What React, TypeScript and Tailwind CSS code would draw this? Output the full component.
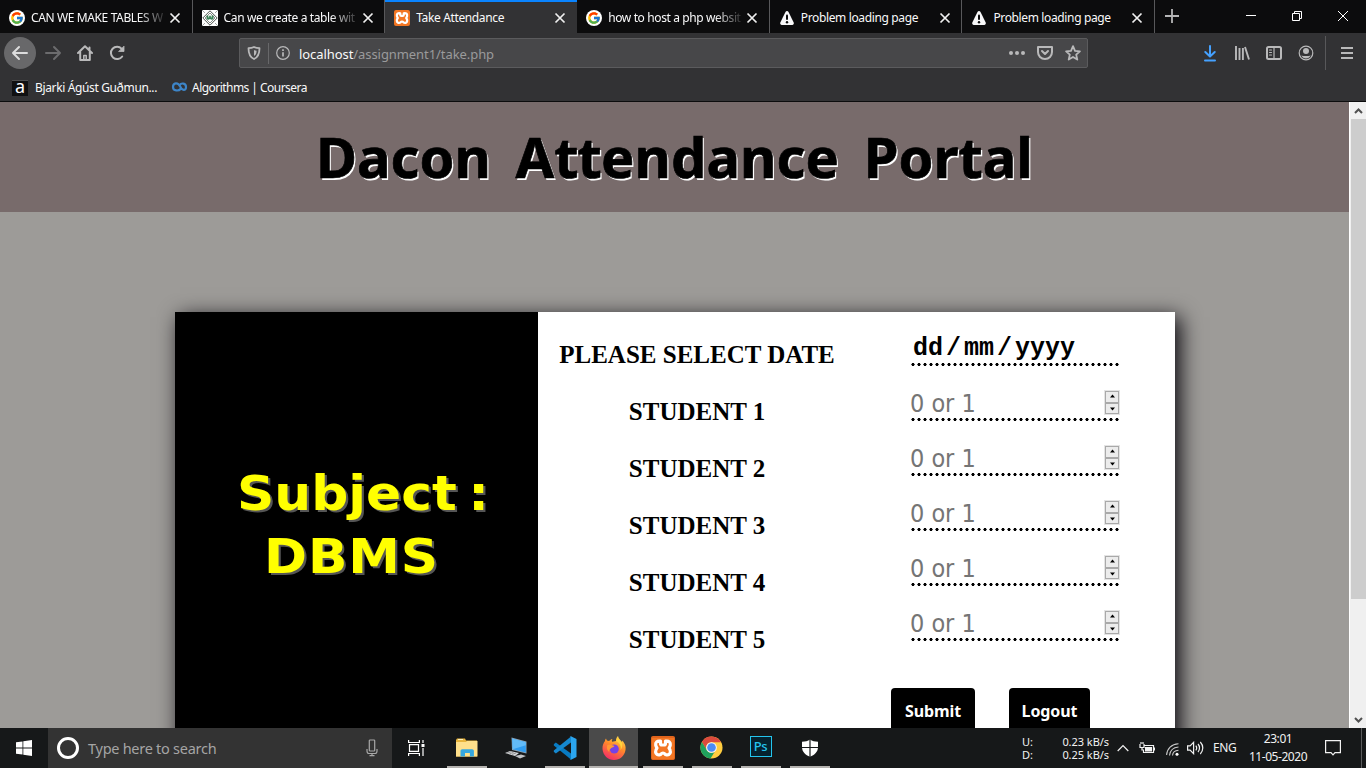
import type { ReactNode } from "react";
import { FcGoogle } from "react-icons/fc";

const ui = "font-['Noto_Sans','Open_Sans',sans-serif]";

function CloseIcon() {
  return (
    <svg width="12" height="12" viewBox="0 0 12 12" fill="none" stroke="#f0f0f0" strokeWidth="1.7">
      <path d="M1.5 1.5 10.5 10.5M10.5 1.5 1.5 10.5" />
    </svg>
  );
}

function GoogleIcon() {
  return (
    <span className="flex h-4 w-4 items-center justify-center rounded-full bg-white">
      <FcGoogle size={14} />
    </span>
  );
}

function GeeksIcon() {
  return (
    <svg width="16" height="16" viewBox="0 0 16 16" fill="none">
      <rect width="16" height="16" fill="#fff" />
      <path d="M8 .8 15.2 8 8 15.2.8 8Z" stroke="#4a514c" strokeWidth="1" />
      <path d="M8 3 13 8 8 13 3 8Z" stroke="#6b736d" strokeWidth=".8" />
      <path d="M4.5 5.5c2 .3 5 .3 7 0v3.200c-1 1.300-2 1.300-3.500.300-1.500 1-2.500 1-3.500-.300Z" fill="#3c8358" />
      <path d="M6 6.800h1.200M8.800 6.800H10" stroke="#fff" strokeWidth=".9" />
      <path d="M0 0 3 3M16 0l-3 3M0 16l3-3M16 16l-3-3" stroke="#8a908c" strokeWidth=".8" />
    </svg>
  );
}

function XamppIcon({ big = false }: { big?: boolean }) {
  return (
    <span
      className={
        big
          ? "flex h-6 w-6 items-center justify-center rounded-[2px] border border-t-2 border-[#e0641c] bg-[#f37623]"
          : "flex h-4 w-4 items-center justify-center rounded-[2px] bg-[#f37623]"
      }
    >
      <svg className="shrink-0" width={big ? 20 : 14} height={big ? 20 : 14} viewBox="0 0 20 20" fill="none" stroke="#fff" strokeWidth="3.200" strokeLinejoin="round">
        <path d="M7.500 3.200C4 2.600 2.300 4.300 2.700 7c.2 1.400.7 2 1.300 3-1 1.200-1.500 2.400-1.400 4 .2 2.300 2 3.300 4.400 2.800 1.200-.3 1-1.800 3-1.800s1.800 1.500 3 1.800c2.400.5 4.200-.5 4.400-2.800.1-1.600-.4-2.800-1.400-4 .6-1 1.100-1.600 1.300-3 .4-2.700-1.300-4.400-4.800-3.800v2.300c0 1-.5 1.500-1.500 1.500H9c-1 0-1.500-.5-1.500-1.500Z" />
      </svg>
    </span>
  );
}

function WarningIcon() {
  return (
    <svg width="16" height="16" viewBox="0 0 16 16">
      <path d="M8 1c.7 0 1.200.4 1.500 1l5.200 10.600c.5 1.100-.2 2.400-1.500 2.400H2.800c-1.300 0-2-1.300-1.500-2.400L6.500 2C6.800 1.400 7.300 1 8 1Z" fill="#f9f9fa" />
      <rect x="7" y="4.600" width="2" height="5.400" rx="1" fill="#0c0c0d" />
      <circle cx="8" cy="12.200" r="1.200" fill="#0c0c0d" />
    </svg>
  );
}

function Tab({ icon, title, active = false, fade = false }: { icon: ReactNode; title: string; active?: boolean; fade?: boolean }) {
  return (
    <div
      className={
        active
          ? "flex h-[33px] w-[192px] shrink-0 items-center border-t-2 border-[#0a84ff] bg-[#323234] pl-[9px]"
          : "flex h-[33px] w-[192.600px] shrink-0 items-center border-r border-[#58585a] bg-[#0c0c0d] pl-[9px] pt-[2px]"
      }
    >
      <span className="w-4 shrink-0">{icon}</span>
      <span
        className={
          fade
            ? "ml-[6px] w-[137px] shrink-0 whitespace-nowrap text-[12px] tracking-[-0.38px] text-[#f9f9fa] [mask-image:linear-gradient(to_right,black_78%,transparent_100%)]"
            : "ml-[6px] w-[137px] shrink-0 whitespace-nowrap text-[12px] tracking-[-0.36px] text-[#f9f9fa]"
        }
      >
        {title}
      </span>
      <span className="ml-[1px]"><CloseIcon /></span>
    </div>
  );
}

function TabBar() {
  return (
    <div className="flex h-[33px] bg-[#0c0c0d]">
      <Tab icon={<GoogleIcon />} title="CAN WE MAKE TABLES W" fade />
      <Tab icon={<GeeksIcon />} title="Can we create a table wit" fade />
      <Tab icon={<XamppIcon />} title="Take Attendance" active />
      <Tab icon={<GoogleIcon />} title="how to host a php websit" fade />
      <Tab icon={<WarningIcon />} title="Problem loading page" />
      <Tab icon={<WarningIcon />} title="Problem loading page" />
      <svg className="ml-[10px] mt-[9px]" width="14" height="14" viewBox="0 0 14 14" stroke="#b5b5b6" strokeWidth="1.800">
        <path d="M7 0v14M0 7h14" />
      </svg>
      <div className="ml-auto flex w-[121px] justify-between pr-[17px] pt-[10px]">
        <svg width="12" height="12" viewBox="0 0 12 12" stroke="#fff"><path d="M1 5.500h10" /></svg>
        <svg width="12" height="12" viewBox="0 0 12 12" fill="none" stroke="#fff"><path d="M1.500 3.500h7v7h-7zM3.500 3V1.500h7v7H9" /></svg>
        <svg width="12" height="12" viewBox="0 0 12 12" stroke="#fff"><path d="M1 1l10 10M11 1 1 11" /></svg>
      </div>
    </div>
  );
}

const line = { fill: "none", stroke: "#b9b9ba", strokeWidth: 2, strokeLinecap: "round", strokeLinejoin: "round" } as const;

function Toolbar() {
  return (
    <div className="flex h-[41px] items-center bg-[#323234] pl-1">
      <div className="-mt-[1px] flex h-8 w-8 items-center justify-center rounded-full bg-[#68686a]">
        <svg width="18" height="16" viewBox="0 0 18 16" {...line} stroke="#dcdcdd"><path d="M16 8H2M8 2 2 8l6 6" /></svg>
      </div>
      <svg className="-mt-[1px] ml-[8px]" width="18" height="16" viewBox="0 0 18 16" {...line} stroke="#6c6c6e"><path d="M2 8h14M10 2l6 6-6 6" /></svg>
      <svg className="-mt-[1px] ml-[15px]" width="16" height="16" viewBox="0 0 16 16" {...line}>
        <path d="M1 8 8 1.300 15 8M3.200 7v8h9.600V7M12.500 2.500v2" />
        <path d="M6.800 14.500v-4h2.400v4" strokeWidth="1.500" />
      </svg>
      <svg className="-mt-[2px] ml-[16px]" width="16" height="16" viewBox="0 0 16 16" {...line}>
        <path d="M13.200 11.500A6.200 6.200 0 1 1 12.600 3.600L14 5" />
        <path d="M15 1.500v5h-5Z" fill="#b9b9ba" strokeWidth=".8" />
      </svg>
      <div className="-mt-[1px] ml-[114px] flex h-[30px] w-[849px] items-center rounded-[2px] border border-[#5b5b5d] bg-[#474749]">
        <svg className="ml-[7px]" width="14" height="14" viewBox="0 0 14 14" fill="none" stroke="#b9b9ba" strokeWidth="1.800" strokeLinejoin="round">
          <path d="M7 1C5.500 1.800 3.500 2.200 1.500 2.200 1.500 7 2.500 11 7 13c4.500-2 5.500-6 5.500-10.800C10.500 2.200 8.500 1.800 7 1Z" />
          <path d="M7 4v6c2-1 2.500-3 2.600-5.300C8.700 4.600 8 4.400 7 4Z" fill="#b9b9ba" stroke="none" />
        </svg>
        <span className="ml-[7px] h-[21px] w-px bg-[#68686a]" />
        <svg className="ml-[7px]" width="14" height="14" viewBox="0 0 14 14" fill="none" stroke="#b9b9ba">
          <circle cx="7" cy="7" r="6.300" strokeWidth="1.200" />
          <path d="M7 6.200V10.500M7 3.200v1.700" strokeWidth="1.700" />
        </svg>
        <span className="ml-[9px] pt-[3px] text-[13px] tracking-[-0.07px] text-[#9a9a9b]">
          <span className="text-[#f9f9fa]">localhost</span>/assignment1/take.php
        </span>
        <div className="ml-auto flex items-center pr-[6px]">
          <svg width="18" height="4" viewBox="0 0 18 4" fill="#b9b9ba"><circle cx="3" cy="2" r="2" /><circle cx="9" cy="2" r="2" /><circle cx="15" cy="2" r="2" /></svg>
          <svg className="ml-[11px]" width="16" height="14" viewBox="0 0 16 14" {...line}>
            <path d="M1 1h14v5c0 4-3 7-7 7s-7-3-7-7Z" /><path d="M5 5l3 3 3-3" />
          </svg>
          <svg className="ml-[12px]" width="16" height="16" viewBox="0 0 16 16" {...line} strokeWidth="1.800">
            <path d="m8 1.200 2 4.600 4.900.5-3.700 3.300 1.100 5L8 12l-4.300 2.600 1.100-5L1.100 6.300 6 5.800Z" />
          </svg>
        </div>
      </div>
      <div className="ml-auto flex h-full items-center pb-[1px]">
        <svg width="12" height="17" viewBox="0 0 12 17" {...line} stroke="#45a1ff"><path d="M6 1v10M1.300 7 6 11.500 10.700 7M1 15.500h10" /></svg>
        <svg className="ml-[18px]" width="16" height="14" viewBox="0 0 16 14" fill="none" stroke="#b9b9ba" strokeWidth="1.900"><path d="M2 0v14M5.500 2v12M8.900 2v12M11 1l4 12.500" /></svg>
        <svg className="ml-[16px]" width="16" height="14" viewBox="0 0 16 14" {...line}><rect x="1" y="1" width="14" height="12" rx="1.500" /><path d="M8 1v12M3.500 4h2M3.500 6.500h2M3.500 9h2" strokeWidth="1.200" /></svg>
        <svg className="ml-[16px]" width="16" height="16" viewBox="0 0 16 16"><circle cx="8" cy="8" r="6.800" fill="none" stroke="#b9b9ba" strokeWidth="1.200" /><circle cx="8" cy="6" r="3" fill="#b9b9ba" /><path d="M3.300 10.500c2 .7 7.400.7 9.400 0-1 2-2.700 3-4.700 3s-3.700-1-4.700-3Z" fill="#b9b9ba" /></svg>
        <span className="ml-[11px] h-[34px] w-px bg-[#58585a]" />
        <svg className="ml-[15px] mr-[13px]" width="12" height="12" viewBox="0 0 12 12" {...line} strokeLinecap="butt"><path d="M0 1h12M0 6h12M0 11h12" /></svg>
      </div>
    </div>
  );
}

function Bookmarks() {
  return (
    <div className="flex h-[28px] items-center border-b border-[#0c0c0d] bg-[#323234] pl-3 text-[12px] text-[#f9f9fa]">
      <span className="flex h-4 w-4 items-center justify-center border-t border-[#505050] bg-[#101011] pb-[4px] text-[18px] leading-none text-white">a</span>
      <span className="ml-[7px] w-[130px] whitespace-nowrap pt-[1px] tracking-[-0.36px]">Bjarki Ágúst Guðmun...</span>
      <svg className="-mt-[1px] ml-[6px]" width="17" height="10" viewBox="0 0 17 10" fill="none" stroke="#3d85c8" strokeWidth="2.200" strokeLinecap="round">
        <path d="M9.500 7C8 9 2 9.500 2 5s5-5 7-.8c2 4.800 6 4.800 6 .8s-4.800-4.500-6.300-1.800" />
      </svg>
      <span className="ml-[4px] whitespace-nowrap pt-[1px] tracking-[-0.54px]">Algorithms | Coursera</span>
    </div>
  );
}

function Dots() {
  return <div className="-ml-[2px] h-[3px] w-[210px] bg-[radial-gradient(circle,#000_1.350px,transparent_1.850px)] bg-[length:6px_3px]" />;
}

function NumberField() {
  return (
    <div className="flex h-[55px] flex-col justify-end">
      <div className="flex h-[30px] w-[207px] items-start">
        <span className="-ml-[2px] font-['DejaVu_Sans_Condensed','DejaVu_Sans',sans-serif] text-[25px] font-stretch-condensed leading-[31px] tracking-[-0.03px] text-[#757575]">0 or 1</span>
        <div className="-mr-[1px] ml-auto mt-[2px] flex h-[25px] w-[16px] flex-col border border-[#e4e4e4]">
          {["M2 4.500h5L4.500 1.500Z", "M2 2.500h5L4.500 5.500Z"].map((d) => (
            <span key={d} className="flex flex-1 items-center justify-center border border-[#a9a9a9] bg-[#ececec]">
              <svg width="9" height="7" viewBox="0 0 9 7"><path d={d} fill="#000" /></svg>
            </span>
          ))}
        </div>
      </div>
      <Dots />
    </div>
  );
}

const labels = ["PLEASE SELECT DATE", "STUDENT 1", "STUDENT 2", "STUDENT 3", "STUDENT 4", "STUDENT 5"];

function Portal() {
  return (
    <main className="flex h-[626px] overflow-hidden bg-[#9d9b98]">
      <div className="h-full w-[1349px] overflow-hidden">
        <h1 className="flex h-[110px] items-center justify-center whitespace-nowrap bg-[#786b6b] pb-[2px] text-[56px] font-bold text-black [-webkit-text-stroke:0.7px_#000] [text-shadow:1.500px_1.500px_0_#fff]">
          <span className="flex w-[717px] justify-between">
            <span>Dacon</span>
            <span className="tracking-[0.1px]">A<span className="tracking-[-1px]">tt</span>endance</span>
            <span>Portal</span>
          </span>
        </h1>
        <section className="ml-[175px] mt-[100px] flex h-[500px] w-[1000px] bg-white shadow-[5px_5px_20px_#08060c]">
          <div className="w-[363px] bg-black pt-[150px] font-['DejaVu_Sans',sans-serif] text-[48px] font-bold leading-[63px] text-[#ffff00] [text-shadow:2px_2px_0_#555]">
            <p className="ml-[62px] origin-left scale-x-[1.08] [word-spacing:-6px]">Subject :</p>
            <p className="ml-[89px] origin-left scale-x-[1.08] tracking-[0.8px]">DBMS</p>
          </div>
          <div className="w-[318px] pt-[14px] text-center font-['Liberation_Serif',serif] text-[25px] font-bold text-black">
            {labels.map((label) => (
              <p key={label} className="h-[57px] leading-[57px]">{label}</p>
            ))}
          </div>
          <div className="w-[319px]">
            <div className="ml-[56px] h-[51px] w-[207px] pl-[1px] pt-[22px] font-['Courier_10_Pitch','Liberation_Mono',monospace] text-[25px] font-bold leading-[29px] text-black">
              dd<span className="mx-[3px]">/</span>mm<span className="mx-[3px]">/</span>yyyy
            </div>
            <div className="ml-[56px]">
              <Dots />
              {labels.slice(1).map((label) => <NumberField key={label} />)}
            </div>
            <div className="ml-[35px] mt-[47px] flex gap-[34px] text-[16px] font-bold tracking-[-0.1px] text-white">
              <button className="h-[47px] w-[84px] rounded-[4px] bg-black pb-[2px]">Submit</button>
              <button className="h-[47px] w-[81px] rounded-[4px] bg-black pb-[2px]">Logout</button>
            </div>
          </div>
        </section>
      </div>
      <div className="flex w-[17px] flex-col items-center border-l border-white bg-[#f0f0f0]">
        <svg className="h-[17px] shrink-0" width="9" height="17" viewBox="0 0 9 17" fill="none" stroke="#505050" strokeWidth="2"><path d="m1 11 3.500-3.500L8 11" /></svg>
        <div className="h-[480px] w-[15px] bg-[#cdcdcd]" />
        <svg className="mt-auto h-[17px] shrink-0" width="9" height="17" viewBox="0 0 9 17" fill="none" stroke="#505050" strokeWidth="2"><path d="m1 7 3.500 3.500L8 7" /></svg>
      </div>
    </main>
  );
}

function ExplorerIcon() {
  return (
    <svg width="22" height="19" viewBox="0 0 22 19">
      <path d="M0 2 1 .5h8l1 2H21v16H0Z" fill="#e9b53c" />
      <path d="M0 4h10l1-1h10.500v15.500H0Z" fill="#ffe08b" />
      <path d="M2 1.500h5" stroke="#fff1bd" />
      <path d="M4.500 18.500V13c0-1 .8-1.700 1.700-1.700h10c1 0 1.700.7 1.700 1.700v5.500h-4V15H9v3.500Z" fill="#35a7df" />
    </svg>
  );
}

function ComputerIcon() {
  return (
    <svg width="24" height="22" viewBox="0 0 24 22">
      <path d="M7.500.5 22.500 4.500v12L8 13Z" fill="#8fa3b3" />
      <path d="M8.200 1.500 21.800 5.200v10.300L8.700 12.300Z" fill="#2f9cf0" />
      <path d="M8.200 1.500 21.800 5.200v3L8.700 12.300Z" fill="#62bbf8" />
      <path d="m1 16 5-2 9 2-4 3Z" fill="#d5d7da" /><path d="m11 19 6-1.500 5 1.500-6 2.500Z" fill="#c0c3c7" />
      <path d="m3 16.200 4-1.400m-1.500 2 4-1.400m-1.500 2 4-1.400" stroke="#777" strokeWidth=".7" />
    </svg>
  );
}

function CodeIcon() {
  return (
    <svg width="24" height="24" viewBox="0 0 24 24">
      <path d="M.8 8.300 2.800 6.500 18 17.500v6L.8 9.500Z" fill="#087bc2" />
      <path d="M.8 15.700 2.800 17.500 18 6.500v-6L.8 14.500Z" fill="#1588cf" />
      <path d="M18 .3 23.500 3v18L18 23.700 16.700 23c.8.3 1.300-.2 1.300-1V2c0-.8-.5-1.300-1.300-1Z" fill="#2ba5ee" />
    </svg>
  );
}

function FirefoxIcon() {
  return (
    <svg width="24" height="24" viewBox="0 0 24 24">
      <defs>
        <linearGradient id="fox" x1=".8" y1="0" x2=".3" y2="1"><stop stopColor="#ffe14b" /><stop offset=".45" stopColor="#ff8a2a" /><stop offset="1" stopColor="#f42b68" /></linearGradient>
      </defs>
      <path d="M3 5c0-1 .5-2 1-2.500C4.500 4 5 4.500 6 5l2-.5C8.500 3.500 9.500 3 10.500 3c-.8 1-.8 2-.3 2.800L14 5c-.3-2 .7-4 2-5 .5 3 3 4 4 6l.5-1.500C23 8 24 10 23.500 14 22.500 20 18 24 12 24S1 19.500.5 13C.3 9.500 1.500 7 3 5Z" fill="url(#fox)" />
      <circle cx="12.300" cy="13" r="4.500" fill="#7542e5" />
      <path d="M5.500 9c3-.8 5 .2 7 1-1 1.500-3.500 1.500-4 3 0 0-2 .5-1 3-3-2-3-5-2-7Z" fill="#ff9933" />
      <path d="M14 5c4 2 5.500 5 4.500 9 2-2 2-5 1.500-7l-4-5Z" fill="#ffd43c" />
    </svg>
  );
}

function ChromeIcon() {
  return (
    <svg width="23" height="23" viewBox="0 0 24 24">
      <circle cx="12" cy="12" r="11.500" fill="#ffcd40" />
      <path d="M2 6.250A11.500 11.500 0 0 1 22 6.500H12A5.500 5.500 0 0 0 7 14.500Z" fill="#dc4a3d" />
      <path d="M2 6.250 7.200 14.800A5.500 5.500 0 0 0 15.500 16.300L11 23.500A11.500 11.500 0 0 1 2 6.250Z" fill="#1fa15d" />
      <circle cx="12" cy="12" r="5.600" fill="#f5f5f5" /><circle cx="12" cy="12" r="4.500" fill="#4b8cf5" />
    </svg>
  );
}

function ShieldIcon() {
  return (
    <svg width="18" height="18" viewBox="0 0 18 18">
      <path d="M9 .5C7 2 4 2.700 1 2.700V8c0 5 3.500 8 8 9.700C13.500 16 17 13 17 8V2.700C14 2.700 11 2 9 .5Z" fill="#fff" />
      <path d="M9 0v18M0 8.500h18" stroke="#17191a" strokeWidth="1.200" />
    </svg>
  );
}

function TaskButton({ children, state = "open" }: { children: ReactNode; state?: "open" | "idle" | "active" }) {
  return (
    <div className={state === "active" ? "flex h-10 w-[49px] flex-col items-center bg-[#4a4a4a]" : "flex h-10 w-[49px] flex-col items-center"}>
      <div className="flex flex-1 items-center pt-[1px]">{children}</div>
      <span className={state === "idle" ? "h-[2px]" : state === "active" ? "h-[2px] w-full bg-[#b5b3b0]" : "h-[2px] w-10 bg-[#b5b3b0]"} />
    </div>
  );
}

function Taskbar() {
  const tray = { fill: "none", stroke: "#f2f2f2", strokeWidth: 1.2 } as const;
  return (
    <footer className="flex h-10 items-center bg-[#161819] text-[#f2f2f2]">
      <div className="flex w-12 justify-center">
        <svg width="16" height="16" viewBox="0 0 16 16" fill="#fff"><path d="M0 2.300 6.500 1.400v6.200H0ZM7.300 1.300 16 0v7.600H7.300ZM0 8.400h6.500v6.200L0 13.700ZM7.300 8.400H16V16l-8.700-1.300Z" /></svg>
      </div>
      <div className="flex h-10 w-[344px] items-center bg-[#333]">
        <span className="ml-[9px] h-[22px] w-[22px] rounded-full border-[3px] border-white" />
        <span className="ml-[9px] pt-[1px] text-[14.500px] tracking-[-0.27px] text-[#a5a5a5]">Type here to search</span>
        <svg className="ml-auto mr-[14px]" width="12" height="18" viewBox="0 0 12 18" fill="none" stroke="#a8a8a8" strokeWidth="1.200"><rect x="3.300" y="1" width="5.400" height="11" rx=".8" /><path d="M1 10v2c0 1.700 1 2.500 2 2.500h6c1 0 2-.8 2-2.500v-2M6 14.500v2.500M3.500 16.700h5" /></svg>
      </div>
      <div className="flex w-[50px] justify-center pr-[2px]">
        <svg width="17" height="16" viewBox="0 0 17 16" {...tray} stroke="#fff"><path d="M.6 0v2.500h10.800V0M.6 16v-2.500h10.800V16M1.500 4.700h9v6.600h-9ZM15 0v3M15 8v8" /><path d="M13.500 4h3v3h-3Z" fill="#fff" stroke="none" /></svg>
      </div>
      <TaskButton><ExplorerIcon /></TaskButton>
      <TaskButton state="idle"><ComputerIcon /></TaskButton>
      <TaskButton><CodeIcon /></TaskButton>
      <TaskButton state="active"><FirefoxIcon /></TaskButton>
      <TaskButton><XamppIcon big /></TaskButton>
      <TaskButton><ChromeIcon /></TaskButton>
      <TaskButton>
        <span className="-mt-[2px] flex h-[21px] w-[22px] items-center justify-center border-[1.500px] border-[#24c5ee] bg-[#06222e] text-[13px] font-medium leading-none tracking-[-0.3px] text-[#24c5ee]">Ps</span>
      </TaskButton>
      <TaskButton><ShieldIcon /></TaskButton>
      <div className="ml-auto flex items-center text-[12px]">
        <div className="w-[87px] text-[11px] leading-[13px] tracking-[-0.05px]">
          <div className="flex justify-between"><span>U:</span><span>0.23 kB/s</span></div>
          <div className="flex justify-between"><span>D:</span><span>0.25 kB/s</span></div>
        </div>
        <svg className="ml-[8px]" width="12" height="8" viewBox="0 0 12 8" {...tray}><path d="m.7 7 5.300-5.500L11.300 7" /></svg>
        <svg className="ml-[10px]" width="16" height="13" viewBox="0 0 16 13" {...tray}><path d="M1 2v3.500h4V2M2 0v2M4 0v2M3 5.500V8h2M5.500 3.500h9v7h-10v-2M15.500 5.500v3" /><path d="M6 5h7v4.500H6Z" fill="#f2f2f2" stroke="none" /></svg>
        <svg className="ml-[11px] mt-[2px]" width="13" height="13" viewBox="0 0 13 13" {...tray} strokeWidth="1.100"><path d="M.6 12C1 5.500 5.500 1 12.500.7M3.500 12.500C4 7.500 7 4.500 12.500 4M6.500 12.500c.3-3 2.500-5 6-5.200" stroke="#c9c9c9" /><circle cx="11" cy="11.300" r="1.500" fill="#fff" stroke="none" /></svg>
        <svg className="ml-[8px]" width="17" height="14" viewBox="0 0 17 14" {...tray}><path d="M.6 4.800h2.500l3.500-3.500v11.400L3.100 9.200H.6ZM8.800 4.700c1 1.300 1 3.300 0 4.600M11 3c2 2.200 2 5.800 0 8M13.300 1c3.300 3.500 3.300 8.500 0 12" /></svg>
        <span className="ml-[9px] w-[24px] tracking-[-0.4px]">ENG</span>
        <div className="ml-[9px] w-[64px] text-center leading-[18px] tracking-[-0.45px]">
          <div>23:01</div><div className="whitespace-nowrap">11-05-2020</div>
        </div>
        <svg className="ml-[15px] mr-[20px]" width="16" height="16" viewBox="0 0 16 16" {...tray}><path d="M.6.6h14.800v12H10l-2 2.300-2-2.300H.6Z" /></svg>
        <span className="mr-1 h-10 w-px bg-[#5a5b5c]" />
      </div>
    </footer>
  );
}

export default function App() {
  return (
    <div className={`${ui} h-[768px] w-[1366px] overflow-hidden`}>
      <TabBar />
      <Toolbar />
      <Bookmarks />
      <Portal />
      <Taskbar />
    </div>
  );
}
